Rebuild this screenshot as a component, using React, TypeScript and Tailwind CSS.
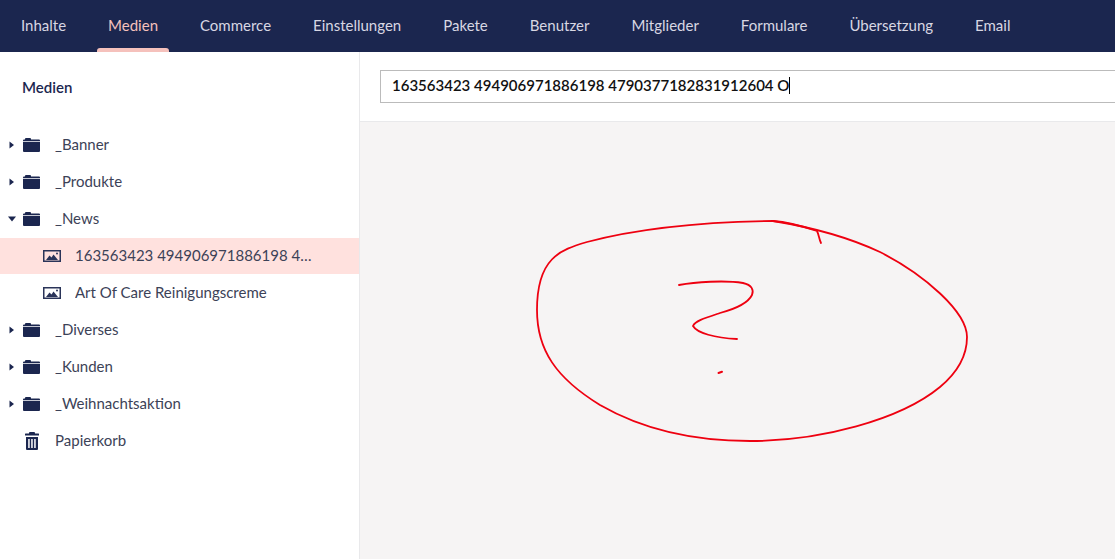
const navItems = ['Inhalte', 'Medien', 'Commerce', 'Einstellungen', 'Pakete', 'Benutzer', 'Mitglieder', 'Formulare', 'Übersetzung', 'Email'];

const tree = [
  { label: '_Banner', type: 'folder' },
  { label: '_Produkte', type: 'folder' },
  { label: '_News', type: 'folder', open: true },
  { label: '163563423 494906971886198 4790377182831912604 O', type: 'image', active: true },
  { label: 'Art Of Care Reinigungscreme', type: 'image' },
  { label: '_Diverses', type: 'folder' },
  { label: '_Kunden', type: 'folder' },
  { label: '_Weihnachtsaktion', type: 'folder' },
  { label: 'Papierkorb', type: 'trash' },
];

const FolderIcon = () => (
  <svg width="17" height="14" viewBox="0 0 17 14" className="shrink-0">
    <path d="M0 2.5Q0 1.5 1 1.5H2V1Q2 0 3 0H7Q8 0 8 1V1.5H16Q17 1.5 17 2.5V3H0Z" fill="#1b264f" />
    <path d="M0 3.8H17V13Q17 14 16 14H1Q0 14 0 13Z" fill="#1b264f" />
  </svg>
);

const ImageIcon = () => (
  <svg width="18" height="12" viewBox="0 0 18 12" className="shrink-0">
    <rect x="0.75" y="0.75" width="16.5" height="10.5" fill="none" stroke="#2a3459" strokeWidth="1.5" />
    <path d="M3 10L6.5 5.5L8.5 7.5L10.5 4.5L15 10Z" fill="#2a3459" />
    <circle cx="14" cy="3.5" r="1" fill="#2a3459" />
  </svg>
);

const TrashIcon = () => (
  <svg width="14" height="18" viewBox="0 0 14 18" className="shrink-0">
    <path d="M5 0H9Q10 0 10 1V1.5H13.5Q14 1.5 14 2V3.5H0V2Q0 1.5 0.5 1.5H4V1Q4 0 5 0Z" fill="#1b264f" />
    <path fillRule="evenodd" d="M1 5H13V17Q13 18 12 18H2Q1 18 1 17ZM3.2 7V16H4.7V7ZM6.2 7V16H7.7V7ZM9.2 7V16H10.7V7Z" fill="#1b264f" />
  </svg>
);

const Caret = ({ open }: { open?: boolean }) => (
  <svg width="8" height="8" viewBox="0 0 8 8" className="shrink-0">
    {open ? <path d="M0 1.5H8L4 6.5Z" fill="#1b264f" /> : <path d="M1.5 0.5L6 4L1.5 7.5Z" fill="#1b264f" />}
  </svg>
);

const App = () => {
  return (
    <div className="h-[559px] w-[1115px] overflow-hidden flex flex-col bg-white font-['Lato','Liberation_Sans',sans-serif]">
      <nav className="h-[52px] shrink-0 bg-[#1b264f] flex">
        {navItems.map((item) => (
          <div
            key={item}
            className={`relative h-full px-[21px] flex items-center pb-[2px] text-[15px] whitespace-nowrap ${
              item === 'Medien' ? 'text-[#f5c1bc]' : 'text-[#d8d7e3]'
            }`}
          >
            {item}
            {item === 'Medien' && (
              <span className="absolute left-[10px] right-[10px] bottom-0 h-[4px] rounded-t-[3px] bg-[#f5c1bc]" />
            )}
          </div>
        ))}
      </nav>

      <div className="flex flex-1 min-h-0">
        <aside className="w-[360px] shrink-0 border-r border-[#e9e9eb] bg-white">
          <h2 className="pl-[22px] pt-[25px] h-[75px] text-[15px] leading-[20px] font-semibold text-[#1b264f]">Medien</h2>
          <ul>
            {tree.map((row) => (
              <li
                key={row.label}
                className={`flex items-center text-[15px] text-[#3c4257] ${
                  row.active ? 'h-[36px] mb-[1px] pb-[1px] bg-[#ffe1de] pr-[46px]' : 'h-[37px] pb-[2px]'
                } ${row.type === 'image' ? 'pl-[43px]' : 'pl-[8px]'}`}
              >
                {row.type === 'folder' && <Caret open={row.open} />}
                {row.type === 'folder' && <span className="ml-[7px]"><FolderIcon /></span>}
                {row.type === 'folder' && <span className="ml-[15px]">{row.label}</span>}
                {row.type === 'image' && <ImageIcon />}
                {row.type === 'image' && <span className="ml-[14px] truncate">{row.label}</span>}
                {row.type === 'trash' && <span className="ml-[17px]"><TrashIcon /></span>}
                {row.type === 'trash' && <span className="ml-[16px]">{row.label}</span>}
              </li>
            ))}
          </ul>
        </aside>

        <main className="flex-1 min-w-0 flex flex-col bg-[#f6f4f4]">
          <div className="h-[70px] shrink-0 bg-white border-b border-[#e9e9eb] pl-[20px] pt-[18px]">
            <div className="w-[800px] h-[33px] border border-[#bbbbbb] bg-white pl-[11px] pb-[2px] flex items-center text-[15px] font-semibold text-[#111111] whitespace-nowrap">
              163563423 494906971886198 4790377182831912604 O
              <span className="inline-block w-[1px] h-[17px] bg-black" />
            </div>
          </div>
          <svg viewBox="360 122 755 437" className="block w-[755px] h-[437px]" fill="none" stroke="#ee0010" strokeWidth="1.8" strokeLinecap="round">
            <path d="M773 221C700 222 640 228 587 242C560 250 537 258 537 310C537 350 556 378 600 405C640 428 690 441 750 441C820 441 900 420 940 387C958 372 967 355 967 337C967 312 925 275 880 252C850 238 810 227 773 221Z" />
            <path d="M773 221C788 222 802 226 817 231C819 235 819 239 821 243" />
            <path d="M679 285C695 282 725 280 743 283C752 285 754 290 752 295C748 303 735 309 720 313C705 318 695 321 693 326C697 333 715 338 737 339" />
            <path d="M718.5 373L722 371.8" strokeWidth="2" />
          </svg>
        </main>
      </div>
    </div>
  );
};

export default App;
